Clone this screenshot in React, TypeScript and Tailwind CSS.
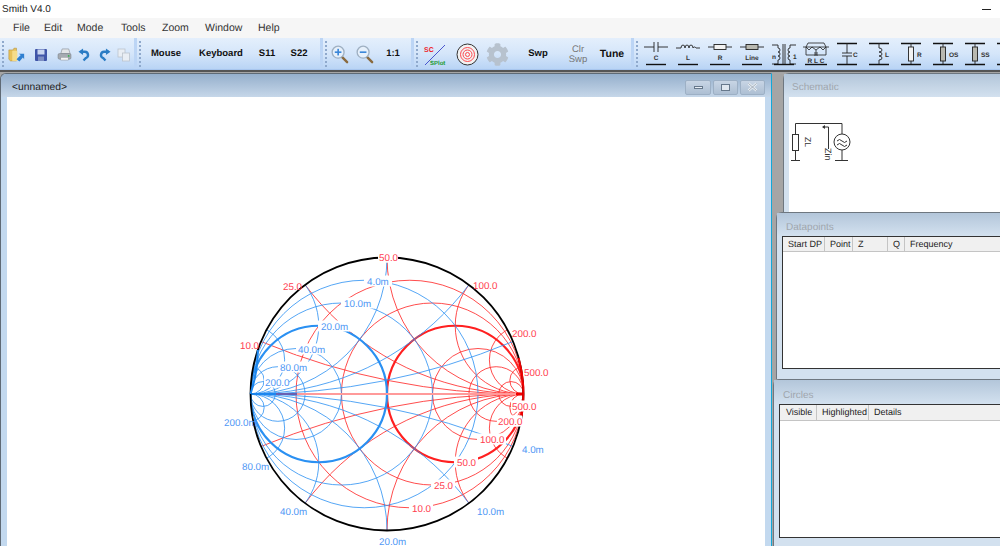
import { FaCog } from "react-icons/fa";

const RED = "#ff2020";
const BLUE = "#2a90f2";
const CX = 387;
const CY = 394;
const RAD = 136.5;

const menus = [
  { name: "File", w: "w-[31px]" },
  { name: "Edit", w: "w-[33px]" },
  { name: "Mode", w: "w-[44px]" },
  { name: "Tools", w: "w-[41px]" },
  { name: "Zoom", w: "w-[43px]" },
  { name: "Window", w: "w-[53px]" },
  { name: "Help", w: "w-[40px]" },
];

const steps = [0.2, 0.5, 1, 2, 4, 10];

// x, y (middle of text), anchor start, pad gives the gap cut out of the arcs, over also cuts the rim
const labels: { t: string; x: number; y: number; c: "r" | "b"; w: number; pad?: number; over?: boolean }[] = [
  { t: "50.0", x: 379, y: 257, c: "r", w: 18, over: true },
  { t: "25.0", x: 283, y: 286, c: "r", w: 18 },
  { t: "10.0", x: 240, y: 345, c: "r", w: 18 },
  { t: "100.0", x: 473, y: 285, c: "r", w: 23 },
  { t: "200.0", x: 512, y: 333, c: "r", w: 23 },
  { t: "500.0", x: 524, y: 372, c: "r", w: 23 },
  { t: "500.0", x: 512, y: 406, c: "r", w: 23, over: true },
  { t: "200.0", x: 498, y: 421, c: "r", w: 23, over: true },
  { t: "100.0", x: 480, y: 439, c: "r", w: 23, pad: 3 },
  { t: "50.0", x: 457, y: 462, c: "r", w: 18, pad: 3 },
  { t: "25.0", x: 434, y: 485, c: "r", w: 18, pad: 3 },
  { t: "10.0", x: 412, y: 508, c: "r", w: 18, pad: 3 },
  { t: "4.0m", x: 367, y: 281, c: "b", w: 22, pad: 3 },
  { t: "10.0m", x: 344, y: 303, c: "b", w: 27, pad: 3 },
  { t: "20.0m", x: 321, y: 326, c: "b", w: 27, pad: 3 },
  { t: "40.0m", x: 298, y: 349, c: "b", w: 27, pad: 2 },
  { t: "80.0m", x: 280, y: 367, c: "b", w: 27, pad: 2 },
  { t: "200.0", x: 265, y: 382, c: "b", w: 23, pad: 1 },
  { t: "200.0m", x: 224, y: 422, c: "b", w: 29 },
  { t: "80.0m", x: 242, y: 466, c: "b", w: 27 },
  { t: "40.0m", x: 280, y: 511, c: "b", w: 27 },
  { t: "20.0m", x: 379, y: 541, c: "b", w: 27 },
  { t: "10.0m", x: 477, y: 511, c: "b", w: 27 },
  { t: "4.0m", x: 522, y: 449, c: "b", w: 22 },
];

// piece of the rim between two heights, side 1 = right, -1 = left
function rimArc(y1: number, y2: number, side: number) {
  const px = (y: number) => CX + side * Math.sqrt(RAD * RAD - (y - CY) * (y - CY));
  return `M${px(y1)} ${y1}A${RAD} ${RAD} 0 0 ${side === 1 ? 1 : 0} ${px(y2)} ${y2}`;
}

function SmithChart() {
  // sign 1 = impedance grid (red), -1 = admittance grid (blue)
  const grid = (sign: number, color: string) => (
    <g fill="none" stroke={color} clipPath="url(#unit)">
      {steps.map((v) => (
        <circle
          key={"c" + v}
          cx={CX + (sign * RAD * v) / (1 + v)}
          cy={CY}
          r={RAD / (1 + v)}
          strokeWidth={v === 1 ? 2.2 : 1}
          strokeOpacity={v === 1 ? 1 : 0.8}
        />
      ))}
      {steps.map((v) => (
        <g key={"a" + v} strokeOpacity={0.8}>
          <circle cx={CX + sign * RAD} cy={CY - RAD / v} r={RAD / v} strokeWidth={1} />
          <circle cx={CX + sign * RAD} cy={CY + RAD / v} r={RAD / v} strokeWidth={1} />
        </g>
      ))}
    </g>
  );

  return (
    <svg viewBox="7 97 758 450" className="block w-[758px] h-[450px]">
      <defs>
        <clipPath id="unit">
          <circle cx={CX} cy={CY} r={RAD} />
        </clipPath>
      </defs>
      {grid(1, RED)}
      {grid(-1, BLUE)}
      <rect x={251} y={393} width={273} height={2} fill="#ff9a9a" />
      <rect x={251} y={393} width={25} height={2} fill="#1c86ee" />
      <rect x={276} y={393} width={21} height={2} fill="#6a5fb0" />
      <rect x={516} y={392.5} width={8} height={3} fill="#f00000" />
      {/* white boxes cut the arcs, the rim stays whole */}
      {labels.map((l, i) => {
        const pad = l.pad ?? 1;
        return <rect key={i} x={l.x - pad} y={l.y - 5.5} width={l.w + pad * 2} height={11} fill="#fff" />;
      })}
      <circle cx={CX} cy={CY} r={RAD} fill="none" stroke="#000" strokeWidth={1.8} />
      <path d={rimArc(358, 416, 1)} fill="none" stroke="#f00000" strokeWidth={2} />
      <path d={rimArc(394, 350, -1)} fill="none" stroke="#1c86ee" strokeWidth={2} />
      {labels.filter((l) => l.over).map((l, i) => (
        <rect key={i} x={l.x - 1} y={l.y - 5.5} width={l.w + 2} height={11} fill="#fff" />
      ))}
      {labels.map((l, i) => (
        <text
          key={i}
          x={l.x}
          y={l.y + 3.5}
          className={l.c === "r" ? "text-[9.8px] fill-[#ff3b4e]" : "text-[9.8px] fill-[#4f97f5]"}
        >
          {l.t}
        </text>
      ))}
    </svg>
  );
}

function Grip() {
  return (
    <div className="w-[6px] h-full flex flex-col justify-center items-center gap-[2px] shrink-0">
      {[0, 1, 2, 3, 4, 5, 6].map((i) => (
        <div key={i} className="w-[2px] h-[2px] bg-[#8fa9cc]" />
      ))}
    </div>
  );
}

function Btn({ w, children }: { w: string; children: React.ReactNode }) {
  return <div className={`${w} h-full pt-[2px] flex items-center justify-center shrink-0`}>{children}</div>;
}

function Word({ children }: { children: React.ReactNode }) {
  return <span className="text-[9.5px] font-bold text-[#111]">{children}</span>;
}

function FolderIcon() {
  return (
    <svg width="17" height="18" viewBox="0 0 20 20">
      <path d="M1 4h5l1 -2h3v15H3l-2 -2z" fill="#e8c15a" stroke="#b08a2e" strokeWidth="0.6" />
      <rect x="5" y="5" width="6" height="12" fill="#f6dc8a" />
      <path d="M10 15l5 -5 -2.5 -1.5H19V15l-1.500 -2 -4 4.500z" fill="#2f7fd0" />
    </svg>
  );
}

function SaveIcon() {
  return (
    <svg width="14" height="14" viewBox="0 0 14 14">
      <rect x="1" y="1" width="12" height="12" rx="1" fill="#3f55a8" />
      <rect x="3.500" y="1.500" width="7" height="5" fill="#c9d6f0" />
      <rect x="4" y="8.500" width="6" height="4.500" fill="#7d8ec2" />
    </svg>
  );
}

function PrintIcon() {
  return (
    <svg width="15" height="13" viewBox="0 0 16 14">
      <path d="M4 6l1.500 -5h7L14 6z" fill="#e3e5e8" stroke="#8a8f96" strokeWidth="0.7" />
      <rect x="1" y="6" width="14" height="6" rx="1.500" fill="#a6abb2" stroke="#70757c" strokeWidth="0.5" />
      <rect x="4" y="10" width="8" height="3" fill="#f4f4f4" stroke="#8a8f96" strokeWidth="0.5" />
      <circle cx="12.500" cy="8.500" r="1" fill="#35b04a" />
    </svg>
  );
}

function UndoIcon({ flip }: { flip?: boolean }) {
  return (
    <svg width="12" height="14" viewBox="0 0 13 15" className={flip ? "-scale-x-100" : ""}>
      <path d="M3 4h4.500a3.500 3.500 0 0 1 1 6.800L6 13.500" fill="none" stroke="#2a7cc4" strokeWidth="2.600" />
      <path d="M5.500 0.500L0.500 4l5 3.500z" fill="#2a7cc4" />
    </svg>
  );
}

function CopyIcon() {
  return (
    <svg width="14" height="14" viewBox="0 0 14 14" fill="#e9eef4" stroke="#bcc4cd" strokeWidth="0.8">
      <rect x="1" y="1" width="7" height="8" />
      <rect x="5.500" y="5" width="7" height="8" />
    </svg>
  );
}

function MagnifyIcon({ plus }: { plus?: boolean }) {
  return (
    <svg width="18" height="19" viewBox="0 0 19 20">
      <path d="M11 12l6 6" stroke="#8a6a3e" strokeWidth="2.600" strokeLinecap="round" />
      <circle cx="7.500" cy="7.500" r="6.300" fill="#e6f0fb" stroke="#9fb0c2" strokeWidth="1.400" />
      <rect x="4" y="6.700" width="7" height="1.700" fill="#3a86d8" />
      {plus && <rect x="6.700" y="4" width="1.700" height="7" fill="#3a86d8" />}
    </svg>
  );
}

function SplotIcon() {
  return (
    <svg width="24" height="24" viewBox="0 0 24 24">
      <path d="M2 22L22 2" stroke="#3b46c8" strokeWidth="0.900" />
      <text x="1" y="9" className="text-[7px] font-bold fill-[#ee1c28]">
        SC
      </text>
      <text x="7" y="22" className="text-[6px] font-bold fill-[#1d9a35]">
        SPlot
      </text>
    </svg>
  );
}

function TargetIcon() {
  return (
    <svg width="23" height="23" viewBox="0 0 23 23" fill="none">
      <circle cx="11.500" cy="11.500" r="10.500" fill="#f2f2f2" stroke="#333" strokeWidth="1" />
      <circle cx="11.500" cy="11.500" r="7" stroke="#ff4a50" strokeWidth="1" />
      <circle cx="11.500" cy="11.500" r="4.500" stroke="#ff4a50" strokeWidth="1" />
      <circle cx="11.500" cy="11.500" r="2" stroke="#ff4a50" strokeWidth="1" />
    </svg>
  );
}

function Series({ label, children }: { label: string; children: React.ReactNode }) {
  return (
    <svg width="32" height="32" viewBox="0 0 32 32" className="shrink-0">
      <g fill="none" stroke="#222" strokeWidth="0.900">
        {children}
      </g>
      <text x="16" y="22" textAnchor="middle" className="text-[6.500px] font-bold fill-[#333]">
        {label}
      </text>
      <path d="M6 26.500h20" stroke="#111" strokeWidth="1.400" />
    </svg>
  );
}

function Shunt({ label, children }: { label: string; children: React.ReactNode }) {
  return (
    <svg width="32" height="32" viewBox="0 0 32 32" className="shrink-0">
      <path d="M5 5.500h20M5 26.500h20" stroke="#111" strokeWidth="1.400" />
      <g fill="none" stroke="#222" strokeWidth="0.900">
        {children}
      </g>
      <text x="21" y="19" className="text-[6.500px] font-bold fill-[#333]">
        {label}
      </text>
    </svg>
  );
}

function Toolbar() {
  return (
    <div className="h-[32px] flex bg-gradient-to-b from-[#e4effc] via-[#d5e6fa] to-[#b9d4f5] border-b border-[#a8c6ee]">
      <div className="w-[134px] flex shrink-0">
        <Grip />
        <Btn w="w-[20px]"><FolderIcon /></Btn>
        <Btn w="w-[30px]"><SaveIcon /></Btn>
        <Btn w="w-[17px]"><PrintIcon /></Btn>
        <Btn w="w-[22px]"><UndoIcon /></Btn>
        <Btn w="w-[19px]"><UndoIcon flip /></Btn>
        <Btn w="w-[20px]"><CopyIcon /></Btn>
      </div>
      <div className="w-[3px] bg-[#bcd5f5] shrink-0" />
      <div className="w-[183px] flex shrink-0">
        <Grip />
        <Btn w="w-[46px]"><Word>Mouse</Word></Btn>
        <Btn w="w-[64px]"><Word>Keyboard</Word></Btn>
        <Btn w="w-[28px]"><Word>S11</Word></Btn>
        <Btn w="w-[36px]"><Word>S22</Word></Btn>
      </div>
      <div className="w-[3px] bg-[#bcd5f5] shrink-0" />
      <div className="w-[88px] flex shrink-0">
        <Grip />
        <Btn w="w-[22px]"><MagnifyIcon plus /></Btn>
        <Btn w="w-[28px]"><MagnifyIcon /></Btn>
        <Btn w="w-[28px]"><Word>1:1</Word></Btn>
      </div>
      <div className="w-[3px] bg-[#bcd5f5] shrink-0" />
      <div className="w-[217px] flex shrink-0">
        <Grip />
        <Btn w="w-[30px]"><SplotIcon /></Btn>
        <Btn w="w-[34px]"><TargetIcon /></Btn>
        <Btn w="w-[26px]"><FaCog size={23} color="#b7c2ce" /></Btn>
        <Btn w="w-[56px]"><Word>Swp</Word></Btn>
        <Btn w="w-[24px]">
          <span className="text-[9.5px] leading-[10px] text-center text-[#777]">Clr<br />Swp</span>
        </Btn>
        <Btn w="w-[44px]">
          <span className="text-[10.5px] font-bold text-[#111]">Tune</span>
        </Btn>
      </div>
      <div className="w-[3px] bg-[#bcd5f5] shrink-0" />
      <div className="flex-1 flex overflow-hidden">
        <Grip />
        <Series label="C">
          <path d="M4 9h10M14 4v10M18 4v10M18 9h10" />
        </Series>
        <Series label="L">
          <path d="M4 10h5a2 3 0 0 1 4 0a2 3 0 0 1 4 0a2 3 0 0 1 4 0a2 3 0 0 1 3 0h4" />
        </Series>
        <Series label="R">
          <path d="M4 9h6M22 9h6" />
          <rect x="10" y="6.500" width="12" height="5" fill="#f2f2f2" />
        </Series>
        <Series label="Line">
          <path d="M4 9h6M22 9h6" />
          <rect x="10" y="6.500" width="12" height="5" fill="#b8b8b0" />
        </Series>
        <svg width="32" height="32" viewBox="0 0 32 32" className="shrink-0">
          <g fill="none" stroke="#222" strokeWidth="0.900">
            <path d="M4 7h6v3a2 2 0 0 1 0 4a2 2 0 0 1 0 4a2 2 0 0 1 0 4v4H4" />
            <path d="M28 7h-6v3a2 2 0 0 0 0 4a2 2 0 0 0 0 4a2 2 0 0 0 0 4v4h6" />
            <path d="M15 6v20M17 6v20" />
          </g>
          <text x="4" y="21" className="text-[6.500px] font-bold fill-[#333]">n</text>
          <text x="25" y="21" className="text-[6.500px] font-bold fill-[#333]">1</text>
          <path d="M6 26.500h20" stroke="#111" strokeWidth="1.400" />
        </svg>
        <svg width="32" height="32" viewBox="0 0 32 32" className="shrink-0">
          <g fill="none" stroke="#222" strokeWidth="0.800">
            <path d="M3 9h26M6 9l2 -4h16l2 4M6 9l3 3 3 -3 4 3 4 -3 3 3 3 -3" />
            <path d="M6 9v8h20v-8M16 12v5" />
            <path d="M14 15h4M14 17h4" />
          </g>
          <text x="16" y="24.500" textAnchor="middle" className="text-[6.500px] font-bold fill-[#333]">R L C</text>
          <path d="M5 26.500h22" stroke="#111" strokeWidth="1.400" />
        </svg>
        <Shunt label="C">
          <path d="M15 5v10M10 15h10M10 18h10M15 18v8" />
        </Shunt>
        <Shunt label="L">
          <path d="M15 5v5a3 2 0 0 1 0 4a3 2 0 0 1 0 4a3 2 0 0 1 0 4v4" />
        </Shunt>
        <Shunt label="R">
          <path d="M15 5v4M15 23v3" />
          <rect x="12.500" y="9" width="5" height="14" fill="#f2f2f2" />
        </Shunt>
        <Shunt label="OS">
          <path d="M15 5v4M15 23v3" />
          <rect x="12.500" y="9" width="5" height="14" fill="#b8b8b0" />
        </Shunt>
        <Shunt label="SS">
          <path d="M15 5v4M15 23v3" />
          <rect x="12.500" y="9" width="5" height="14" fill="#b8b8b0" />
        </Shunt>
        <Shunt label="">
          <path d="M15 5v21" />
        </Shunt>
      </div>
    </div>
  );
}

function WinButton({ w, children }: { w: string; children: React.ReactNode }) {
  return (
    <div className={`${w} h-[15px] flex items-center justify-center rounded-[2px] border border-[#9db0c5] bg-gradient-to-b from-[#c8d5e5] to-[#adbfd3]`}>
      {children}
    </div>
  );
}

function MainWindow() {
  return (
    <div className="w-[772px] h-[474px] flex flex-col shrink-0 rounded-tl-[6px] border-t border-l border-r border-[#5f6a75] border-r-[#12a8d8] bg-[#c3d9ef] overflow-hidden">
      <div className="h-[23px] pt-[3px] flex items-center justify-between pl-[11px] pr-[6px] bg-gradient-to-b from-[#95afcc] to-[#c6d7e9] shrink-0">
        <span className="mt-[2px] text-[10.3px] text-[#222]">&lt;unnamed&gt;</span>
        <div className="flex gap-[2px]">
          <WinButton w="w-[26px]"><div className="w-[9px] h-[3px] bg-[#e8eef5] border border-[#66788c]" /></WinButton>
          <WinButton w="w-[25px]"><div className="w-[9px] h-[7px] bg-[#dfe7f0] border border-[#66788c]" /></WinButton>
          <WinButton w="w-[25px]">
            <svg width="11" height="10" viewBox="0 0 11 10">
              <path d="M1.500 1.500l8 7M9.500 1.500l-8 7" stroke="#e6ecf2" strokeWidth="2.400" />
              <path d="M1.500 1.500l8 7M9.500 1.500l-8 7" stroke="#8d99a6" strokeWidth="0.700" />
            </svg>
          </WinButton>
        </div>
      </div>
      <div className="flex-1 mx-[6px] bg-white overflow-hidden">
        <SmithChart />
      </div>
    </div>
  );
}

function Dock({ title, className, titleClass, children }: { title: string; className: string; titleClass: string; children: React.ReactNode }) {
  return (
    <div className={`${className} flex flex-col rounded-tl-[6px] border-t border-l border-[#6e7780] bg-[#d3e1ef]`}>
      <div className={`${titleClass} flex items-center shrink-0 bg-gradient-to-b from-[#b3c6da] to-[#d3e1ef]`}>
        <span className="text-[10px] text-[#a0a6ad]">{title}</span>
      </div>
      {children}
    </div>
  );
}

function HeadCell({ w, pl, children }: { w: string; pl: string; children: React.ReactNode }) {
  return (
    <div className={`${w} ${pl} h-full pt-px flex items-center border-r border-[#c4c4c4] text-[9px] text-[#222] shrink-0`}>
      {children}
    </div>
  );
}

function SidePanels() {
  return (
    <div className="flex-1 flex flex-col min-w-0">
      <Dock title="Schematic" className="ml-[11px] h-[139px]" titleClass="h-[23px] pt-[3px] pl-[8px]">
        <div className="ml-[5px] flex-1 bg-white">
          <svg viewBox="789 97 70 70" className="block w-[70px] h-[70px]">
            <g fill="none" stroke="#333" strokeWidth="1">
              <path d="M795.500 134v-10.500h46.500V134M795.500 151v9M791 160.500h9M842 150v10M835 160.500h13" />
              <rect x="792.500" y="134.500" width="6" height="16" />
              <circle cx="842" cy="142" r="8" />
              <path d="M837 141q2.500 -3 5 0t5 0M837 145q2.500 -3 5 0t5 0" />
              <path d="M828.500 149v-22H823" />
            </g>
            <path d="M822 127l3 -2v4z" fill="#333" />
            <text transform="translate(805 137) rotate(90)" className="text-[8.500px] fill-[#333]">ZL</text>
            <text transform="translate(825 148) rotate(90)" className="text-[9px] fill-[#333]">Zin</text>
          </svg>
        </div>
      </Dock>
      <Dock title="Datapoints" className="ml-[4px] h-[167px]" titleClass="h-[23px] pt-[5px] pl-[9px]">
        <div className="ml-[5px] h-[133px] flex flex-col border-t border-b border-l border-[#333] bg-white">
          <div className="h-[15px] flex bg-[#f0f0f0] border-b border-[#c4c4c4]">
            <HeadCell w="w-[42px]" pl="pl-[5px]">Start DP</HeadCell>
            <HeadCell w="w-[28px]" pl="pl-[5px]">Point</HeadCell>
            <HeadCell w="w-[35px]" pl="pl-[5px]">Z</HeadCell>
            <HeadCell w="w-[17px]" pl="pl-[5px]">Q</HeadCell>
            <div className="pl-[5px] pt-px flex items-center text-[9px] text-[#222]">Frequency</div>
          </div>
        </div>
      </Dock>
      <Dock title="Circles" className="ml-[1px] h-[167px]" titleClass="h-[24px] pt-[6px] pl-[9px]">
        <div className="ml-[5px] h-[134px] flex flex-col border-t border-b border-l border-[#333] bg-white">
          <div className="h-[16px] flex bg-[#f0f0f0] border-b border-[#c4c4c4]">
            <HeadCell w="w-[37px]" pl="pl-[6px]">Visible</HeadCell>
            <HeadCell w="w-[52px]" pl="pl-[5px]">Highlighted</HeadCell>
            <div className="pl-[5px] pt-px flex items-center text-[9px] text-[#222]">Details</div>
          </div>
        </div>
      </Dock>
    </div>
  );
}

export default function App() {
  return (
    <div className="w-[1000px] h-[546px] overflow-hidden flex flex-col bg-white font-['Liberation_Sans',Arial,sans-serif] [text-rendering:geometricPrecision]">
      <div className="h-[18px] pt-px flex items-center justify-between pl-[2px] pr-[9px] shrink-0">
        <span className="text-[10px] text-[#222]">Smith V4.0</span>
        <div className="w-[9px] h-px bg-[#222]" />
      </div>
      <div className="h-[20px] pt-px flex items-center pl-[13px] bg-[#f6f6f6] shrink-0">
        {menus.map((m) => (
          <span key={m.name} className={`${m.w} text-[10.5px] text-[#333]`}>
            {m.name}
          </span>
        ))}
      </div>
      <Toolbar />
      <div className="flex-1 flex bg-[#a5a5a5] border-t-2 border-[#555] pt-px min-h-0">
        <MainWindow />
        <SidePanels />
      </div>
    </div>
  );
}
